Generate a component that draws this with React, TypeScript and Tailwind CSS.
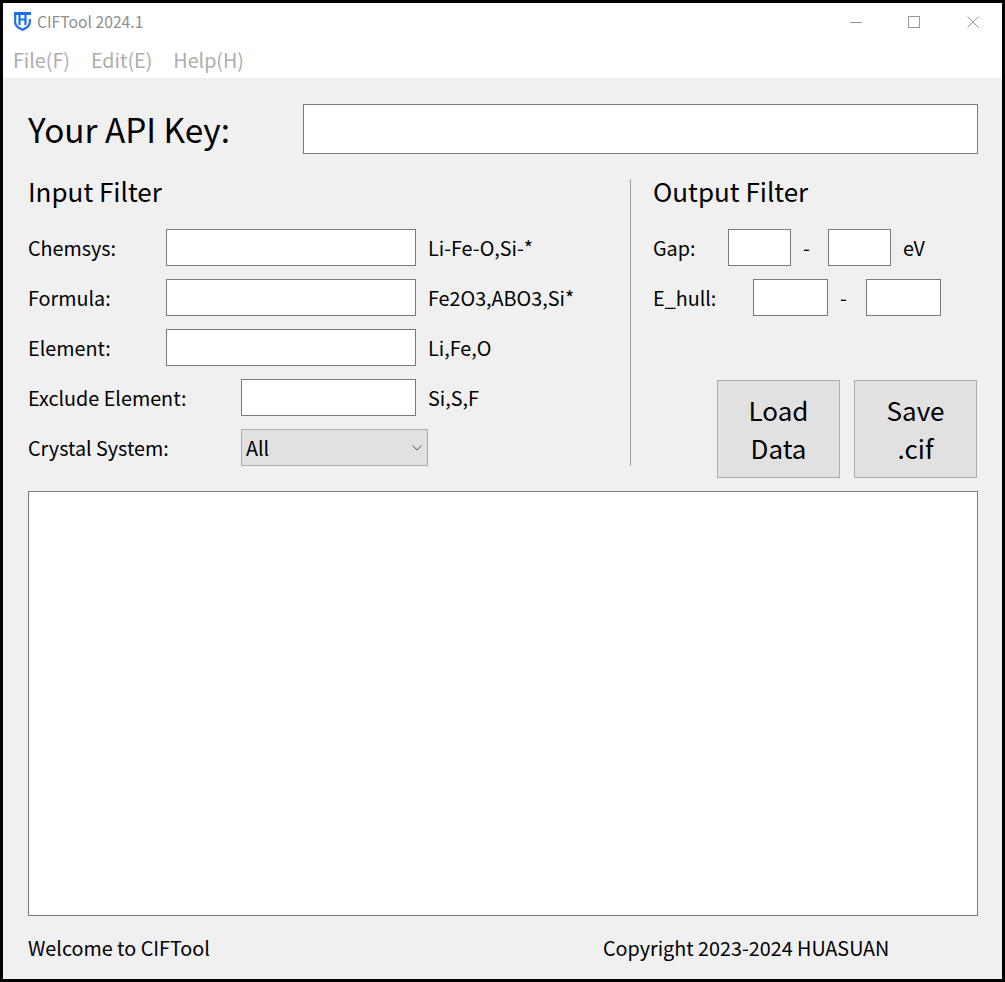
const fontStack = "font-['Noto_Sans_CJK_SC','Noto_Sans',sans-serif]";

const inputCls = "h-[37px] border border-[#7a7a7a] bg-white shrink-0";

function FilterRow({ label, labelW, inputW, hint }: { label: string; labelW: string; inputW: string; hint: string }) {
  return (
    <div className="flex h-[37px] items-center text-[19.75px] text-black">
      <span className={labelW}>{label}</span>
      <div className={`${inputCls} ${inputW}`} />
      <span className="ml-[12px]">{hint}</span>
    </div>
  );
}

export default function App() {
  return (
    <div className={`${fontStack} flex h-[982px] w-[1005px] flex-col border-[3px] border-black bg-[#f0f0f0] leading-none`}>
      <header className="h-[75px] bg-white">
        <div className="flex h-[37px] items-center pl-[11px]">
          <svg width="17" height="19" viewBox="0 0 17 19" className="mr-[6px]">
            <path d="M0 0h17v3H0z" fill="#1a6cf0" />
            <path
              d="M1.200 2v8.500c0 3.500 3.300 5.600 7.300 7.200 4-1.600 7.300-3.700 7.300-7.200V7"
              fill="none"
              stroke="#1a6cf0"
              strokeWidth="2.200"
            />
            <path d="M5.500 2v11M11.500 2v11M5.500 7.500h6" stroke="#1a6cf0" strokeWidth="2.200" fill="none" />
          </svg>
          <span className="text-[15.7px] text-[#8f8f8f]">CIFTool 2024.1</span>
          <div className="ml-auto flex items-center">
            <svg width="12" height="12" viewBox="0 0 12 12" className="mr-[46px]">
              <path d="M0 6.500h12" stroke="#999" strokeWidth="1" />
            </svg>
            <svg width="12" height="12" viewBox="0 0 12 12" className="mr-[47px]">
              <rect x="0.500" y="0.500" width="11" height="11" fill="none" stroke="#999" />
            </svg>
            <svg width="12" height="12" viewBox="0 0 12 12" className="mr-[23px]">
              <path d="M0.500 0.500l11 11M11.500 0.500l-11 11" stroke="#999" strokeWidth="1" />
            </svg>
          </div>
        </div>
        <nav className="flex h-[38px] items-center gap-[21px] pl-[10px] pt-[2px] text-[19.7px] text-[#adadad]">
          <span>File(F)</span>
          <span>Edit(E)</span>
          <span>Help(H)</span>
        </nav>
      </header>

      <main className="flex flex-1 flex-col pl-[25px] pr-[24px] pt-[26px]">
        <div className="flex h-[50px] items-center">
          <span className="w-[275px] text-[33.3px] text-black">Your API Key:</span>
          <div className="h-[50px] flex-1 border border-[#7a7a7a] bg-white" />
        </div>

        <div className="mt-[25px] flex h-[299px]">
          <section className="w-[602px]">
            <h2 className="flex h-[23px] items-center text-[26px] font-normal text-black">Input Filter</h2>
            <div className="mt-[27px] flex flex-col gap-[13px]">
              <FilterRow label="Chemsys:" labelW="w-[138px]" inputW="w-[250px]" hint="Li-Fe-O,Si-*" />
              <FilterRow label="Formula:" labelW="w-[138px]" inputW="w-[250px]" hint="Fe2O3,ABO3,Si*" />
              <FilterRow label="Element:" labelW="w-[138px]" inputW="w-[250px]" hint="Li,Fe,O" />
              <FilterRow label="Exclude Element:" labelW="w-[213px]" inputW="w-[175px]" hint="Si,S,F" />
              <div className="flex h-[37px] items-center text-[19.75px] text-black">
                <span className="w-[213px]">Crystal System:</span>
                <div className="flex h-[37px] w-[187px] items-center justify-between border border-[#adadad] bg-[#e1e1e1] pl-[4px] pr-[5px]">
                  <span>All</span>
                  <svg width="10" height="6" viewBox="0 0 10 6">
                    <path d="M0.500 0.500L5 5l4.500-4.500" stroke="#555" strokeWidth="1" fill="none" />
                  </svg>
                </div>
              </div>
            </div>
          </section>

          <div className="h-[287px] w-px bg-[#a0a0a0]" />

          <section className="ml-[22px] flex-1">
            <h2 className="flex h-[23px] items-center text-[26px] font-normal text-black">Output Filter</h2>
            <div className="mt-[27px] flex h-[37px] items-center text-[19.75px] text-black">
              <span className="w-[75px]">Gap:</span>
              <div className={`${inputCls} w-[63px]`} />
              <span className="w-[37px] pl-[12px]">-</span>
              <div className={`${inputCls} w-[63px]`} />
              <span className="ml-[12px]">eV</span>
            </div>
            <div className="mt-[13px] flex h-[37px] items-center text-[19.75px] text-black">
              <span className="w-[100px]">E_hull:</span>
              <div className={`${inputCls} w-[75px]`} />
              <span className="w-[38px] pl-[12px]">-</span>
              <div className={`${inputCls} w-[75px]`} />
            </div>
            <div className="ml-[64px] mt-[64px] flex gap-[14px]">
              {["Load", "Save"].map((top, i) => (
                <button
                  key={top}
                  className="flex h-[98px] w-[123px] flex-col items-center justify-center gap-[12px] border border-[#adadad] bg-[#e1e1e1] text-[26px] text-black"
                >
                  <span>{top}</span>
                  <span>{i === 0 ? "Data" : ".cif"}</span>
                </button>
              ))}
            </div>
          </section>
        </div>

        <div className="mt-[13px] h-[425px] border border-[#7a7a7a] bg-white" />

        <footer className="flex flex-1 items-center text-[19.75px] text-black">
          <span className="w-[575px]">Welcome to CIFTool</span>
          <span>Copyright 2023-2024 HUASUAN</span>
        </footer>
      </main>
    </div>
  );
}
